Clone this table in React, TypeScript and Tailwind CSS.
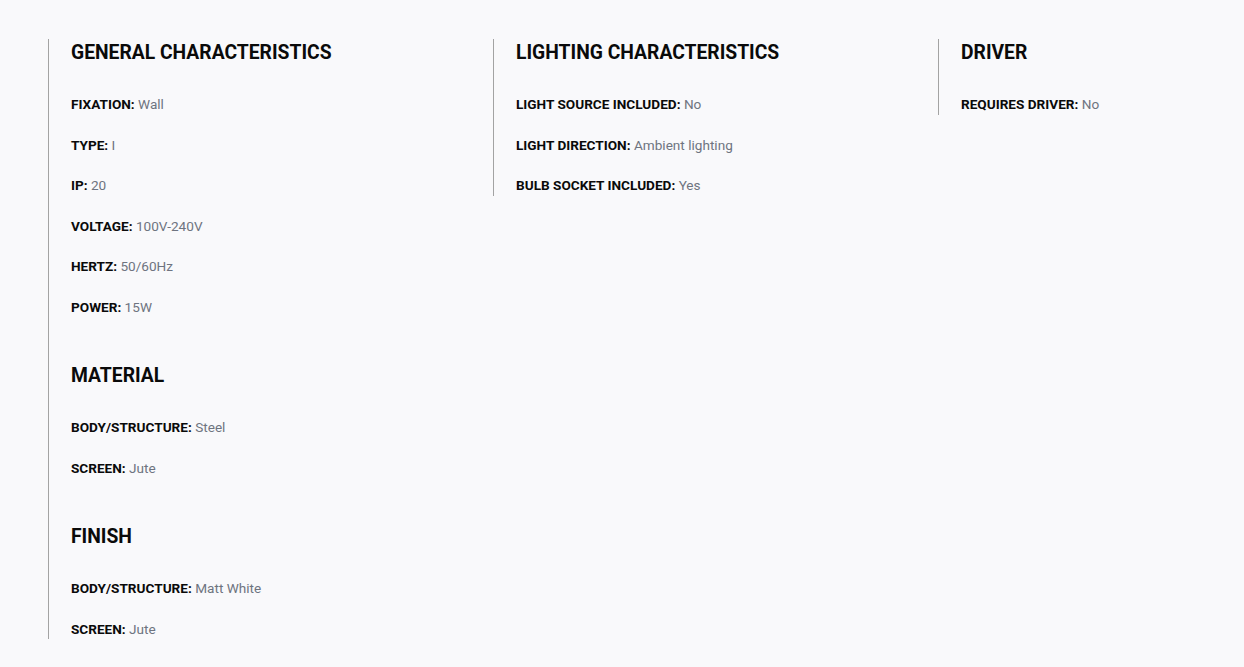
const SECTIONS_LEFT = [
  {
    title: "GENERAL CHARACTERISTICS",
    items: [
      ["FIXATION", "Wall"],
      ["TYPE", "I"],
      ["IP", "20"],
      ["VOLTAGE", "100V-240V"],
      ["HERTZ", "50/60Hz"],
      ["POWER", "15W"],
    ],
  },
  {
    title: "MATERIAL",
    items: [
      ["BODY/STRUCTURE", "Steel"],
      ["SCREEN", "Jute"],
    ],
  },
  {
    title: "FINISH",
    items: [
      ["BODY/STRUCTURE", "Matt White"],
      ["SCREEN", "Jute"],
    ],
  },
];

const SECTIONS_MID = [
  {
    title: "LIGHTING CHARACTERISTICS",
    items: [
      ["LIGHT SOURCE INCLUDED", "No"],
      ["LIGHT DIRECTION", "Ambient lighting"],
      ["BULB SOCKET INCLUDED", "Yes"],
    ],
  },
];

const SECTIONS_RIGHT = [
  {
    title: "DRIVER",
    items: [["REQUIRES DRIVER", "No"]],
  },
];

type Section = { title: string; items: string[][] };

function SpecColumn({ sections, last }: { sections: Section[]; last?: boolean }) {
  return (
    <div className={`${last ? "flex-1" : "w-[445px] shrink-0"} self-start border-l border-[#a3a3a3] pl-[22px] flex flex-col gap-[45px]`}>
      {sections.map((s) => (
        <section key={s.title}>
          <h3 className="text-[19.3px] leading-[27px] font-bold text-[#0a0a0a]">{s.title}</h3>
          <ul className="mt-[28px] flex flex-col gap-[20px]">
            {s.items.map(([label, value], i) => (
              <li key={i} className="text-[13.6px] leading-[20.5px]">
                <span className="font-bold text-[#0a0a0a]">{label}:</span>{" "}
                <span className="text-[#6e7480]">{value}</span>
              </li>
            ))}
          </ul>
        </section>
      ))}
    </div>
  );
}

export default function App() {
  return (
    <div className="w-full h-[667px] overflow-hidden bg-[#f9f9fb] font-['Roboto',sans-serif]">
      <div className="flex pl-[48px] pt-[39px]">
        <SpecColumn sections={SECTIONS_LEFT} />
        <SpecColumn sections={SECTIONS_MID} />
        <SpecColumn sections={SECTIONS_RIGHT} last />
      </div>
    </div>
  );
}
